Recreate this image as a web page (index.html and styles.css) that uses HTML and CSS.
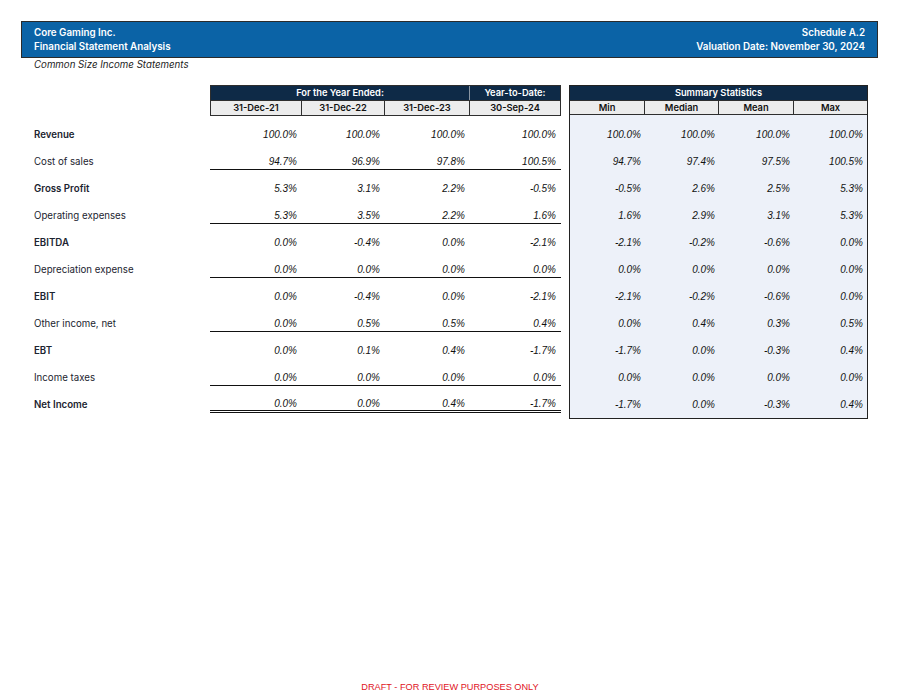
FILE: index.html
```html
<!DOCTYPE html>
<html>
<head>
<meta charset="utf-8">
<link rel="stylesheet" href="styles.css">
</head>
<body>
<div class="page">
  <header class="banner">
    <div class="banner-left">
      <div>Core Gaming Inc.</div>
      <div>Financial Statement Analysis</div>
    </div>
    <div class="banner-right">
      <div>Schedule A.2</div>
      <div>Valuation Date: November 30, 2024</div>
    </div>
  </header>
  <div class="subtitle">Common Size Income Statements</div>

  <div class="report">
    <section class="main">
      <div class="head-row">
        <div class="spacer"></div>
        <div class="hblock years">
          <div class="navy span3">For the Year Ended:</div>
          <div class="navy ytd">Year-to-Date:</div>
          <div class="grey">31-Dec-21</div>
          <div class="grey">31-Dec-22</div>
          <div class="grey">31-Dec-23</div>
          <div class="grey last">30-Sep-24</div>
        </div>
      </div>
      <div class="row bold"><div class="label">Revenue</div><div class="v">100.0%</div><div class="v">100.0%</div><div class="v">100.0%</div><div class="v">100.0%</div></div>
      <div class="row line"><div class="label">Cost of sales</div><div class="v">94.7%</div><div class="v">96.9%</div><div class="v">97.8%</div><div class="v">100.5%</div></div>
      <div class="row bold"><div class="label">Gross Profit</div><div class="v">5.3%</div><div class="v">3.1%</div><div class="v">2.2%</div><div class="v">-0.5%</div></div>
      <div class="row line"><div class="label">Operating expenses</div><div class="v">5.3%</div><div class="v">3.5%</div><div class="v">2.2%</div><div class="v">1.6%</div></div>
      <div class="row bold"><div class="label">EBITDA</div><div class="v">0.0%</div><div class="v">-0.4%</div><div class="v">0.0%</div><div class="v">-2.1%</div></div>
      <div class="row line"><div class="label">Depreciation expense</div><div class="v">0.0%</div><div class="v">0.0%</div><div class="v">0.0%</div><div class="v">0.0%</div></div>
      <div class="row bold"><div class="label">EBIT</div><div class="v">0.0%</div><div class="v">-0.4%</div><div class="v">0.0%</div><div class="v">-2.1%</div></div>
      <div class="row line"><div class="label">Other income, net</div><div class="v">0.0%</div><div class="v">0.5%</div><div class="v">0.5%</div><div class="v">0.4%</div></div>
      <div class="row bold"><div class="label">EBT</div><div class="v">0.0%</div><div class="v">0.1%</div><div class="v">0.4%</div><div class="v">-1.7%</div></div>
      <div class="row line"><div class="label">Income taxes</div><div class="v">0.0%</div><div class="v">0.0%</div><div class="v">0.0%</div><div class="v">0.0%</div></div>
      <div class="row bold double"><div class="label">Net Income</div><div class="v">0.0%</div><div class="v">0.0%</div><div class="v">0.4%</div><div class="v">-1.7%</div></div>
    </section>

    <section class="stats">
      <div class="hblock sblock">
        <div class="navy span4">Summary Statistics</div>
        <div class="grey">Min</div>
        <div class="grey">Median</div>
        <div class="grey">Mean</div>
        <div class="grey last">Max</div>
      </div>
      <div class="srow"><div class="v">100.0%</div><div class="v">100.0%</div><div class="v">100.0%</div><div class="v">100.0%</div></div>
      <div class="srow"><div class="v">94.7%</div><div class="v">97.4%</div><div class="v">97.5%</div><div class="v">100.5%</div></div>
      <div class="srow"><div class="v">-0.5%</div><div class="v">2.6%</div><div class="v">2.5%</div><div class="v">5.3%</div></div>
      <div class="srow"><div class="v">1.6%</div><div class="v">2.9%</div><div class="v">3.1%</div><div class="v">5.3%</div></div>
      <div class="srow"><div class="v">-2.1%</div><div class="v">-0.2%</div><div class="v">-0.6%</div><div class="v">0.0%</div></div>
      <div class="srow"><div class="v">0.0%</div><div class="v">0.0%</div><div class="v">0.0%</div><div class="v">0.0%</div></div>
      <div class="srow"><div class="v">-2.1%</div><div class="v">-0.2%</div><div class="v">-0.6%</div><div class="v">0.0%</div></div>
      <div class="srow"><div class="v">0.0%</div><div class="v">0.4%</div><div class="v">0.3%</div><div class="v">0.5%</div></div>
      <div class="srow"><div class="v">-1.7%</div><div class="v">0.0%</div><div class="v">-0.3%</div><div class="v">0.4%</div></div>
      <div class="srow"><div class="v">0.0%</div><div class="v">0.0%</div><div class="v">0.0%</div><div class="v">0.0%</div></div>
      <div class="srow"><div class="v">-1.7%</div><div class="v">0.0%</div><div class="v">-0.3%</div><div class="v">0.4%</div></div>
    </section>
  </div>

  <footer class="draft">DRAFT - FOR REVIEW PURPOSES ONLY</footer>
</div>
</body>
</html>
```

FILE: styles.css
```css
* { box-sizing: border-box; }
html, body { margin: 0; padding: 0; background: #fff; }
body {
  font-family: "Inter", "Liberation Sans", sans-serif;
  color: #111;
}
.page {
  min-height: 695px;
  display: flex;
  flex-direction: column;
  padding: 21px 0 0 21px;
}
.banner {
  width: 857px;
  height: 37px;
  background: #0b63a6;
  border: 1px solid #2b2b2b;
  color: #fff;
  display: flex;
  justify-content: space-between;
  align-items: center;
  padding: 0 12px 0 12px;
  font-size: 9.8px;
  font-weight: 600;
  line-height: 14px;
}
.banner-right { text-align: right; }
.subtitle {
  font-size: 9.7px;
  font-style: italic;
  line-height: 12px;
  padding-top: 1px;
  padding-left: 13px;
  color: #222;
}
.report {
  display: flex;
  align-items: flex-start;
  margin-top: 14px;
  padding-left: 13px;
}
.main { width: 527px; }
.head-row { display: flex; }
.spacer { width: 176px; }
.hblock {
  display: grid;
  border: 1px solid #2e2e2e;
  font-size: 9.3px;
  font-weight: 600;
  text-align: center;
  line-height: 14px;
}
.years {
  width: 351px;
  grid-template-columns: 91px 83px 85px 90px;
}
.navy {
  background: #0e2a47;
  color: #fff;
  height: 14px;
}
.span3 { grid-column: span 3; border-right: 1px solid #8a96a3; }
.span4 { grid-column: span 4; }
.grey {
  background: #ececec;
  color: #111;
  height: 15px;
  border-top: 1px solid #2e2e2e;
  border-right: 1px solid #2e2e2e;
}
.grey.last { border-right: none; }

.row {
  display: grid;
  grid-template-columns: 176px 92px 83px 85px 91px;
  height: 27px;
  align-items: end;
  line-height: 12px;
}
.label {
  padding-bottom: 2px;
  font-size: 9.7px;
  color: #1c2430;
}
.bold .label { font-weight: 600; }
.v {
  font-family: "Liberation Sans", Arial, sans-serif;
  font-style: italic;
  font-size: 10px;
  line-height: 12px;
  padding: 0 5px 2px 0;
  color: #111;
  height: 100%;
  display: flex;
  align-items: flex-end;
  justify-content: flex-end;
}
.line .v { border-bottom: 1px solid #111; padding-bottom: 1px; }
.double .v { border-bottom: 3px double #111; padding-bottom: 0; }

.stats {
  width: 299px;
  margin-left: 8px;
  background: #edf1f9;
  border: 1px solid #222;
  padding-bottom: 5px;
}
.sblock {
  border: none;
  margin-bottom: 1px;
  grid-template-columns: 75px 74px 75px 73px;
}
.sblock .grey { border-bottom: 1px solid #2e2e2e; }
.srow {
  display: grid;
  grid-template-columns: 75px 74px 75px 73px;
  height: 27px;
}
.srow .v { padding-right: 4px; }

.draft {
  margin-top: auto;
  margin-left: -21px;
  text-align: center;
  color: #e0141e;
  font-family: "Liberation Sans", Arial, sans-serif;
  font-size: 9.2px;
  line-height: 10px;
  padding-bottom: 3px;
}
```
